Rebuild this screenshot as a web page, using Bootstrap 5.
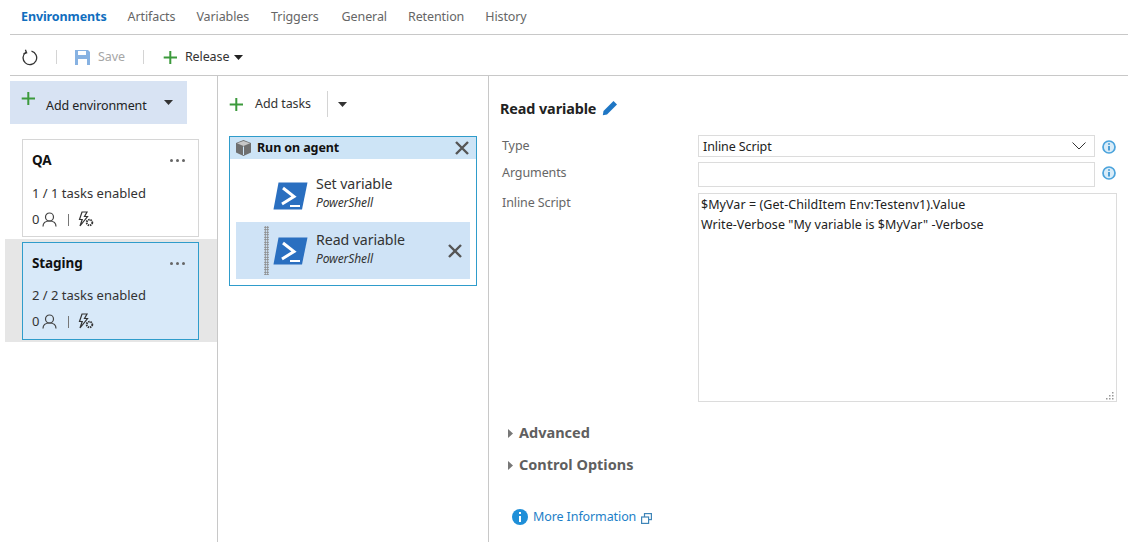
<!DOCTYPE html>
<html lang="en"><head><meta charset="utf-8"><title>Environments</title>
<link href="https://cdn.jsdelivr.net/npm/bootstrap@5.3.0/dist/css/bootstrap.min.css" rel="stylesheet">
<style>
html,body{height:542px;overflow:hidden;background:#fff}
body{font-family:"Noto Sans","Open Sans",sans-serif;font-size:12.5px;color:#333;letter-spacing:-.1px}
.tabbar{height:35px;margin-left:10px;border-bottom:1px solid #c8c8c8;padding:1px 0 0 11px;gap:21px;align-items:center}
.tabbar span{color:#666}
.tabbar .cur{color:#106ebe;font-weight:700}
.tabbar .nudge1{margin-left:1px}
.tabbar .nudge2{margin-left:2px}
.toolrow{height:41px;margin-left:10px;border-bottom:1px solid #c8c8c8;padding:4px 0 0 11px;align-items:center;color:#333}
.sep{width:1px;height:14px;background:#d4d4d4;flex:none}
.sep-a{margin:0 17px 0 18px}
.sep-b{margin:0 19px 0 18px}
.gap-save{margin-right:7px}
.gap-rel{margin-left:7px}
.gap-caret{margin-left:5px}
.savetxt{color:#a6a6a6}
.panes{height:466px}
.envpane{width:218px;border-right:1px solid #c8c8c8;flex:none}
.taskpane{width:271px;border-right:1px solid #c8c8c8;flex:none;padding:7px 11px 0 11px}
.addenv{margin:5px 30px 0 10px;height:43px;background:#d8e3f3;padding:0 14px 0 11px;align-items:center;color:#222}
.addenv .pl{margin:0 10px 8px 0}
.addenv .lb{margin-top:7px}
.envslot{padding:0 17px;margin-left:5px}
.envslot.first{margin-top:15px}
.envslot.on{background:#e6e6e6;height:103px;margin-top:2px;padding-top:3px}
.envbox{border:1px solid #d6d6d6;width:177px;height:98px;padding:10px 9px 0 9px;background:#fff}
.on .envbox{background:#d8e9f9;border-color:#2f9ccb}
.envname{font-weight:700;color:#111;font-size:13.5px}
.dotset{gap:3px}
.dotset i{display:block;width:3px;height:3px;border-radius:50%;background:#666}
.envline{margin-top:14px;color:#333;font-size:13px;letter-spacing:0}
.on .envline{margin-top:13px}
.envfoot{margin-top:6px;gap:3px;align-items:center;color:#333;font-size:13px}
.bar-min{background:#777;height:12px;margin:0 5px 0 8px}
.addtask{height:42px;align-items:center;color:#333}
.addtask .lb{margin-left:11px}
.addtask .sep{height:26px;margin:0 10px 0 16px}
.phase{border:1px solid #2f9ccb;width:248px;height:150px;margin-top:11px}
.phasehead{height:22px;background:#cde4f6;align-items:center;padding:0 7px 0 5px;font-weight:700;color:#111}
.phasehead .cube{margin-right:5px}
.taskrow{height:57px;margin:0 6px;align-items:center;padding-right:8px}
.taskrow.firstrow{height:59px;padding-top:14px}
.taskrow.sel{background:#cfe3f6;margin-top:4px}
.grip{width:5px;height:49px;margin-left:28px;flex:none;background-image:radial-gradient(#8a8a8a 1px,transparent 1px);background-size:2.5px 2.5px}
.nogrip{width:5px;margin-left:28px;flex:none}
.ps-icon{margin:0 8px 0 4px;flex:none}
.tgroup-a{margin-bottom:7px}
.tgroup-b{margin-bottom:4px}
.tname{font-size:14.2px;color:#333;line-height:20px}
.tsub{font-style:italic;font-size:12px;color:#333;line-height:17px}
.detail{flex:1;padding:0 11px;min-width:0}
.dtitle{font-weight:700;font-size:14.4px;color:#222;margin-top:19px;height:28px;align-items:center;gap:6px}
.dtitle svg{margin-bottom:3px}
.frow{align-items:flex-start}
.frow.r1{margin-top:12px}
.frow.r2{margin-top:5px}
.frow.r3{margin-top:6px}
.flabel{width:198px;padding:2px 0 0 2px;color:#666;flex:none}
.r3 .flabel{padding-top:1px}
.fbox{width:397px;border:1px solid #dcdcdc;background:#fff;padding:0 4px;color:#222}
.fbox.fh-sel{height:22px}
.fbox.fh-sel span{padding-top:3px}
.fbox.fh-arg{height:25px}
.infoic{margin:5px 0 0 7px;flex:none}
.r2 .infoic{margin-top:4px}
.scriptbox{width:419px;height:209px;border:1px solid #dcdcdc;padding:1px 2px;line-height:20px;color:#222;letter-spacing:.06px;position:relative}
.rsz{position:absolute;right:1px;bottom:1px}
.section{font-weight:700;font-size:14.5px;letter-spacing:0;color:#5f5f5f;align-items:center;gap:6px;padding-left:8px;height:32px}
.section.s1{margin-top:15px}
.morelink{color:#1d7fc8;align-items:center;gap:5px;padding-left:12px;margin-top:27px}
.morelink .ext{margin-top:2px}
</style></head><body>
<div class="d-flex tabbar"><span class="cur">Environments</span><span>Artifacts</span><span>Variables</span><span class="nudge1">Triggers</span><span class="nudge2">General</span><span>Retention</span><span>History</span></div>
<div class="d-flex toolrow">
<svg width="17" height="17" viewBox="0 0 17 17" fill="none" stroke="#333" stroke-width="1.3"><path d="M5 3.200A6.800 6.800 0 1 0 10.500 2.200"/><path d="M4.400 .8 5.600 3.900 2.500 4.600"/></svg>
<div class="sep sep-a"></div>
<svg class="gap-save" width="17" height="17" viewBox="0 0 17 17"><path fill="#87b2e2" d="M1 1h13l2 2v13H1z"/><path fill="#fff" d="M4 2h8v4H4zM4 10h9v6H4z"/></svg>
<span class="savetxt">Save</span>
<div class="sep sep-b"></div>
<svg width="15" height="15" viewBox="0 0 15 15"><path fill="#3c9a3c" d="M6.300 1h2v5.500H14v2H8.300V14h-2V8.500H.7v-2h5.600z"/></svg>
<span class="gap-rel">Release</span>
<svg class="gap-caret" width="9" height="5" viewBox="0 0 9 5"><path fill="#222" d="M0 0h9L4.500 5z"/></svg>
</div>
<div class="d-flex panes">
<div class="envpane">
<div class="d-flex addenv">
<svg class="pl" width="15" height="15" viewBox="0 0 15 15"><path fill="#3c9a3c" d="M6.300 1h2v5.500H14v2H8.300V14h-2V8.500H.7v-2h5.600z"/></svg>
<span class="flex-grow-1 lb">Add environment</span>
<svg width="9" height="5" viewBox="0 0 9 5"><path fill="#333" d="M0 0h9L4.500 5z"/></svg>
</div>
<div class="envslot first"><div class="envbox">
<div class="d-flex justify-content-between align-items-center"><span class="envname">QA</span><div class="d-flex dotset me-1"><i></i><i></i><i></i></div></div>
<div class="envline">1 / 1 tasks enabled</div>
<div class="d-flex envfoot"><span>0</span>
<svg width="15" height="15" viewBox="0 0 15 15" fill="none" stroke="#444" stroke-width="1.200"><circle cx="7.500" cy="5" r="4"/><path d="M1 14.500c0-4 3-5.500 6.500-5.500s6.500 1.500 6.500 5.500"/></svg>
<div class="sep bar-min"></div>
<svg width="17" height="17" viewBox="0 0 17 17" fill="none" stroke="#333" stroke-width="1.200"><path d="M5 1h5L7.500 5.500h3L3 15l2.200-6.500H2.500z"/><circle cx="12.500" cy="11.500" r="2.800" stroke-width="1.900" stroke-dasharray="1.500 .8"/></svg>
</div></div></div>
<div class="envslot on"><div class="envbox">
<div class="d-flex justify-content-between align-items-center"><span class="envname">Staging</span><div class="d-flex dotset me-1"><i></i><i></i><i></i></div></div>
<div class="envline">2 / 2 tasks enabled</div>
<div class="d-flex envfoot"><span>0</span>
<svg width="15" height="15" viewBox="0 0 15 15" fill="none" stroke="#444" stroke-width="1.200"><circle cx="7.500" cy="5" r="4"/><path d="M1 14.500c0-4 3-5.500 6.500-5.500s6.500 1.500 6.500 5.500"/></svg>
<div class="sep bar-min"></div>
<svg width="17" height="17" viewBox="0 0 17 17" fill="none" stroke="#333" stroke-width="1.200"><path d="M5 1h5L7.500 5.500h3L3 15l2.200-6.500H2.500z"/><circle cx="12.500" cy="11.500" r="2.800" stroke-width="1.900" stroke-dasharray="1.500 .8"/></svg>
</div></div></div>
</div>
<div class="taskpane">
<div class="d-flex addtask">
<svg width="15" height="15" viewBox="0 0 15 15"><path fill="#3c9a3c" d="M6.300 1h2v5.500H14v2H8.300V14h-2V8.500H.7v-2h5.600z"/></svg>
<span class="lb">Add tasks</span>
<div class="sep"></div>
<svg width="9" height="5" viewBox="0 0 9 5"><path fill="#333" d="M0 0h9L4.500 5z"/></svg>
</div>
<div class="phase">
<div class="d-flex phasehead">
<svg class="cube" width="17" height="16" viewBox="0 0 17 16"><path fill="#6f6f6f" d="M8.500 0 16 3v9.500L8.500 16 1 12.500V3z"/><path fill="#c7c7c7" d="M8.500 1 15 3.300 8.500 6 2 3.300z"/><path fill="#cde4f6" d="M8 6.500h1V15H8z"/></svg>
<span class="flex-grow-1">Run on agent</span>
<svg width="14" height="14" viewBox="0 0 14 14" stroke="#555" stroke-width="2.400"><path d="M1 1l12 12M13 1 1 13"/></svg>
</div>
<div class="d-flex taskrow firstrow">
<div class="nogrip"></div>
<svg class="ps-icon" width="35" height="28" viewBox="0 0 35 28"><path fill="#2a6fc0" d="M5.500 .5h29L29 27.500H.5z"/><path d="M10 6l11 8.500L9 22" fill="none" stroke="#fff" stroke-width="3"/><path stroke="#fff" stroke-width="2" d="M17 24h10"/></svg>
<div class="tgroup-a"><div class="tname">Set variable</div><div class="tsub">PowerShell</div></div>
</div>
<div class="d-flex taskrow sel">
<div class="grip"></div>
<svg class="ps-icon" width="35" height="28" viewBox="0 0 35 28"><path fill="#2a6fc0" d="M5.500 .5h29L29 27.500H.5z"/><path d="M10 6l11 8.500L9 22" fill="none" stroke="#fff" stroke-width="3"/><path stroke="#fff" stroke-width="2" d="M17 24h10"/></svg>
<div class="flex-grow-1 tgroup-b"><div class="tname">Read variable</div><div class="tsub">PowerShell</div></div>
<svg width="14" height="14" viewBox="0 0 14 14" stroke="#555" stroke-width="2.400"><path d="M1 1l12 12M13 1 1 13"/></svg>
</div>
</div>
</div>
<div class="detail">
<div class="d-flex dtitle"><span>Read variable</span>
<svg width="16" height="16" viewBox="0 0 16 16"><path fill="#1e76c4" d="M11.500 1 15 4.500 5 14.500 .8 15.300 1.500 11z"/></svg></div>
<div class="d-flex frow r1"><span class="flabel">Type</span>
<div class="fbox fh-sel d-flex justify-content-between align-items-center"><span>Inline Script</span>
<svg class="me-1" width="14" height="8" viewBox="0 0 14 8" fill="none" stroke="#333"><path d="M.5.500 7 7 13.500.500"/></svg></div>
<svg class="infoic" width="14" height="14" viewBox="0 0 14 14"><circle cx="7" cy="7" r="6" fill="#d9ecf8" stroke="#4ba3dc" stroke-width="1.700"/><path stroke="#3f97d2" stroke-width="1.800" d="M7 6v4.500M7 3.200v1.600"/></svg></div>
<div class="d-flex frow r2"><span class="flabel">Arguments</span>
<div class="fbox fh-arg"></div>
<svg class="infoic" width="14" height="14" viewBox="0 0 14 14"><circle cx="7" cy="7" r="6" fill="#d9ecf8" stroke="#4ba3dc" stroke-width="1.700"/><path stroke="#3f97d2" stroke-width="1.800" d="M7 6v4.500M7 3.200v1.600"/></svg></div>
<div class="d-flex frow r3"><span class="flabel">Inline Script</span>
<div class="scriptbox">$MyVar = (Get-ChildItem Env:Testenv1).Value<br>Write-Verbose "My variable is $MyVar" -Verbose
<svg class="rsz" width="10" height="9" viewBox="0 0 10 9" fill="#999"><rect x="7" y="1" width="1.500" height="1.500"/><rect x="4" y="4" width="1.500" height="1.500"/><rect x="7" y="4" width="1.500" height="1.500"/><rect x="1" y="7" width="1.500" height="1.500"/><rect x="4" y="7" width="1.500" height="1.500"/><rect x="7" y="7" width="1.500" height="1.500"/></svg></div></div>
<div class="d-flex section s1"><svg width="5" height="9" viewBox="0 0 5 9"><path fill="#777" d="M0 0l5 4.500L0 9z"/></svg><span>Advanced</span></div>
<div class="d-flex section"><svg width="5" height="9" viewBox="0 0 5 9"><path fill="#777" d="M0 0l5 4.500L0 9z"/></svg><span>Control Options</span></div>
<div class="d-flex morelink">
<svg width="16" height="16" viewBox="0 0 16 16"><circle cx="8" cy="8" r="8" fill="#1f8fd8"/><path stroke="#fff" stroke-width="2" d="M8 7v6M8 3v2"/></svg>
<span>More Information</span>
<svg class="ext" width="11" height="11" viewBox="0 0 11 11" fill="none" stroke="#3f85b8" stroke-width="1.200"><rect x="3.500" y=".6" width="6.900" height="6"/><rect x=".6" y="4" width="7" height="6.400" fill="#fff"/></svg>
</div>
</div>
</div>
<script src="https://cdn.jsdelivr.net/npm/bootstrap@5.3.0/dist/js/bootstrap.bundle.min.js"></script>
</body></html>
